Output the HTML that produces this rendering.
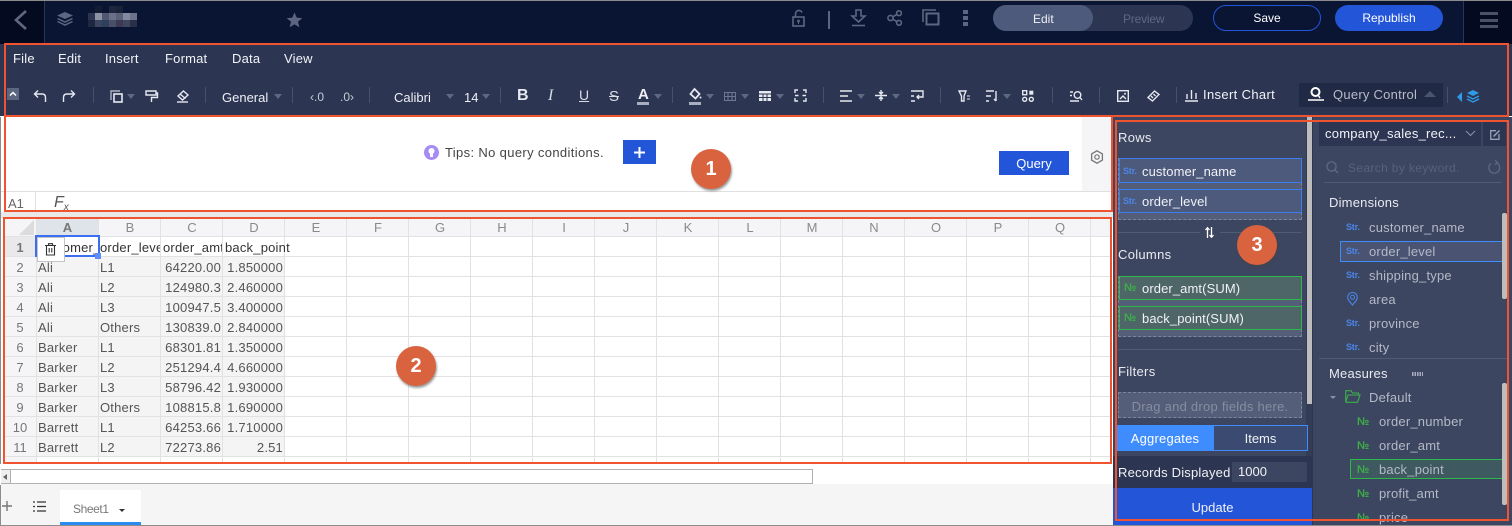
<!DOCTYPE html>
<html><head><meta charset="utf-8"><title>Sheet editor</title>
<style>
*{box-sizing:border-box;margin:0;padding:0}
html,body{width:1512px;height:526px;overflow:hidden;background:#fff}
body{position:relative;font-family:"Liberation Sans","Noto Sans CJK SC",sans-serif;font-size:13px;color:#fff}
.a{position:absolute}
.t{position:absolute;white-space:nowrap;line-height:16px}
.m{top:51px;font-size:13px;color:#f2f4f8;letter-spacing:.2px}
.sep{position:absolute;top:87px;width:1px;height:16px;background:#47506c}
.car{position:absolute;width:0;height:0;border:4px solid transparent;border-top:5px solid #5f6882;border-bottom:0;top:94px}
svg{position:absolute;overflow:visible}
.i{fill:none;stroke:#e6e9f0;stroke-width:1.4}
.h{fill:none;stroke:#5d6680;stroke-width:1.6}
.o{position:absolute;border:2px solid #f0532f;pointer-events:none}
.c{position:absolute;background:#d9623f;border-radius:50%;width:40px;height:40px;color:#fff;font:bold 20px/40px "Liberation Sans",sans-serif;text-align:center;box-shadow:1px 2px 2px rgba(70,70,70,.55)}
.v{position:absolute;top:219px;bottom:0;width:1px;height:243px;background:#e2e2e2}
.hr{position:absolute;left:3px;width:1108px;height:1px;background:#e2e2e2}
.ch{position:absolute;top:219px;height:17px;width:62px;text-align:center;line-height:17px;color:#8a8a8a;font-size:13px}
.rn{position:absolute;left:4px;width:32px;text-align:center;color:#777;font-size:13px;line-height:16px}
.d{position:absolute;color:#555;font-size:13px;line-height:16px;white-space:nowrap;overflow:hidden;letter-spacing:.2px}
.lb{position:absolute;left:1118px;color:#e8ebf2;font-size:13px;font-weight:bold;line-height:16px}
.chip{position:absolute;left:1119px;width:183px;border:1px solid #3b7ef0;background:#4e5a7c;color:#f0f2f7;font-size:13px;line-height:24px;padding-left:22px;letter-spacing:.1px}
.chip.g{border-color:#2eb84a;background:#4e6668}
.s{position:absolute;font:bold 9px/10px "Liberation Sans",sans-serif;color:#4a86e8;letter-spacing:-.2px}
.n{position:absolute;font:bold 11px/10px "Liberation Sans","DejaVu Sans",sans-serif;color:#3dae4a}
.f{position:absolute;color:#b4b9c8;font-size:13px;line-height:16px;letter-spacing:.2px;white-space:nowrap}
</style></head><body>

<!-- header -->
<div class="a" style="left:0;top:0;width:1512px;height:44px;background:#0a1433"></div>
<div class="a" style="left:0;top:0;width:1512px;height:1px;background:#8c8c8c"></div>
<div class="a" style="left:0;top:1px;width:45px;height:43px;background:#040a1f;border-right:1px solid #2c3552"></div>
<svg style="left:0;top:0" width="46" height="44"><path d="M26 11 L16 20 L26 29" fill="none" stroke="#5f6880" stroke-width="2.6"/></svg>
<svg style="top:11px;left:56px" width="20" height="16"><path d="M9 1 L17 4.5 L9 8 L1 4.5Z" fill="#5d6680"/><path d="M1.5 7.5 L9 11 L16.5 7.5M1.5 10.5 L9 14 L16.5 10.5" fill="none" stroke="#5d6680" stroke-width="1.5"/></svg>
<svg style="left:88px;top:6px" width="50" height="21"><g>
<rect x="0" y="7" width="7" height="7" fill="#2c3450"/><rect x="7" y="7" width="7" height="7" fill="#8c93a4"/><rect x="14" y="7" width="7" height="7" fill="#4f5870"/><rect x="21" y="7" width="7" height="7" fill="#69708a"/><rect x="28" y="7" width="7" height="7" fill="#5a6078"/><rect x="35" y="7" width="7" height="7" fill="#828aa0"/><rect x="42" y="7" width="7" height="7" fill="#6c7388"/>
<rect x="0" y="14" width="7" height="7" fill="#1f2740"/><rect x="7" y="14" width="7" height="7" fill="#3a4660"/><rect x="14" y="14" width="7" height="7" fill="#2e405c"/><rect x="21" y="14" width="7" height="7" fill="#4a5068"/><rect x="28" y="14" width="7" height="7" fill="#3c3a52"/><rect x="35" y="14" width="7" height="7" fill="#3f4660"/><rect x="42" y="14" width="7" height="7" fill="#2a3048"/>
<rect x="21" y="0" width="7" height="7" fill="#1e2640"/><rect x="28" y="0" width="7" height="7" fill="#1a2238"/><rect x="7" y="0" width="7" height="7" fill="#141c34"/></g></svg>
<svg style="left:286px;top:12px" width="17" height="16"><path d="M8.5 0.5 L10.7 5.6 L16.3 6.1 L12 9.8 L13.4 15.3 L8.5 12.4 L3.6 15.3 L5 9.8 L0.7 6.1 L6.3 5.6Z" fill="#5d6680"/></svg>
<svg style="left:792px;top:9px" width="14" height="18"><path d="M3.5 8 V5 A3.4 3.4 0 0 1 10 3.5" class="h" /><rect x="1" y="8" width="11" height="9" class="h"/><circle cx="6.5" cy="12" r="1.4" fill="#5d6680"/><rect x="6" y="12" width="1" height="3" fill="#5d6680"/></svg>
<div class="a" style="left:828px;top:11px;width:2px;height:18px;background:#5d6680"></div>
<svg style="left:851px;top:9px" width="16" height="18"><path d="M5 1 H10 V7 H14 L7.5 13 L1 7 H5Z" class="h"/><path d="M1 16.5 H14" class="h"/></svg>
<svg style="left:887px;top:10px" width="16" height="16"><circle cx="3.5" cy="8" r="2.6" class="h"/><circle cx="12" cy="3.2" r="2.4" class="h"/><circle cx="12" cy="12.8" r="2.4" class="h"/><path d="M5.8 6.8 L10 4.3M5.8 9.2 L10 11.7" class="h"/></svg>
<svg style="left:922px;top:9px" width="18" height="17"><path d="M1 13 V1 H14" class="h"/><rect x="4.5" y="4.5" width="12" height="11" fill="none" stroke="#5d6680" stroke-width="2"/></svg>
<div class="a" style="left:963px;top:10px;width:5px;height:16px;background:repeating-linear-gradient(#5d6680 0 4px,transparent 4px 6px)"></div>
<div class="a" style="left:993px;top:5px;width:200px;height:26px;border-radius:13px;background:#2c3552"></div>
<div class="a" style="left:993px;top:5px;width:100px;height:26px;border-radius:13px 13px 13px 13px;background:#4e5a7c"></div>
<div class="t" style="left:1033px;top:11px;font-size:12px;color:#eef0f5">Edit</div>
<div class="t" style="left:1123px;top:11px;font-size:12px;letter-spacing:-.2px;color:#5f6880">Preview</div>
<div class="a" style="left:1213px;top:5px;width:108px;height:26px;border-radius:13px;border:1px solid #2355d8;color:#fff;text-align:center;line-height:24px;font-size:12px">Save</div>
<div class="a" style="left:1335px;top:5px;width:108px;height:26px;border-radius:13px;background:#2355d8;color:#fff;text-align:center;line-height:26px;font-size:12px">Republish</div>
<div class="a" style="left:1463px;top:1px;width:49px;height:43px;background:#040a1f;border-left:1px solid #2c3552"></div>
<div class="a" style="left:1480px;top:12px;width:18px;height:3px;background:#4a5268"></div>
<div class="a" style="left:1480px;top:19px;width:18px;height:3px;background:#4a5268"></div>
<div class="a" style="left:1480px;top:25px;width:18px;height:3px;background:#4a5268"></div>

<!-- toolbar -->
<div class="a" style="left:0;top:44px;width:1512px;height:72px;background:#2c3552"></div>
<div class="t m" style="left:13px">File</div>
<div class="t m" style="left:58px">Edit</div>
<div class="t m" style="left:105px">Insert</div>
<div class="t m" style="left:165px">Format</div>
<div class="t m" style="left:232px">Data</div>
<div class="t m" style="left:284px">View</div>

<div class="a" style="left:7px;top:88px;width:12px;height:12px;background:#5d6680"></div>
<svg style="left:7px;top:88px" width="12" height="12"><path d="M3 7.5 L6 4.5 L9 7.5" fill="none" stroke="#fff" stroke-width="1.5"/></svg>
<svg style="left:33px;top:89px" width="14" height="14"><path d="M5 1.5 L1.5 5 L5 8.5M1.5 5 H9 Q12.5 5 12.5 8.5 V13" class="i"/></svg>
<svg style="left:62px;top:89px" width="14" height="14"><path d="M9 1.5 L12.5 5 L9 8.5M12.5 5 H5 Q1.5 5 1.5 8.5 V13" class="i"/></svg>
<div class="sep" style="left:93px"></div>
<svg style="left:110px;top:90px" width="13" height="13"><path d="M1 10 V1 H10" class="i" stroke-opacity=".7"/><rect x="4" y="4" width="8" height="8" fill="none" stroke="#e6e9f0" stroke-width="1.6"/></svg>
<div class="car" style="left:127px"></div>
<svg style="left:145px;top:90px" width="13" height="13"><path d="M1 1 H11 V5 H1Z M11 3 H12.5 V7.5 H6.5 V12" class="i"/></svg>
<svg style="left:176px;top:90px" width="13" height="13"><path d="M7.5 1 L12 5 L6.5 10 L2 6Z" class="i"/><path d="M4 4 L9.5 8.5" class="i"/><path d="M1 12 H12" class="i"/></svg>
<div class="sep" style="left:205px"></div>
<div class="t" style="left:222px;top:90px;font-size:13px;color:#eef0f5">General</div>
<div class="car" style="left:274px"></div>
<div class="sep" style="left:292px"></div>
<div class="t" style="left:310px;top:89px;font-size:12px;color:#c8ccd8">‹.0</div>
<div class="t" style="left:340px;top:89px;font-size:12px;color:#c8ccd8">.0›</div>
<div class="sep" style="left:369px"></div>
<div class="t" style="left:394px;top:90px;font-size:13px;color:#eef0f5">Calibri</div>
<div class="car" style="left:446px"></div>
<div class="t" style="left:464px;top:90px;font-size:13px;color:#eef0f5">14</div>
<div class="car" style="left:482px"></div>
<div class="sep" style="left:500px"></div>
<div class="t" style="left:517px;top:87px;font:bold 16px/18px 'Liberation Sans',sans-serif;color:#e6e9f0">B</div>
<div class="t" style="left:548px;top:87px;font:italic 16px/18px 'Liberation Serif',serif;color:#d8dce6">I</div>
<div class="t" style="left:579px;top:87px;font-size:14px;line-height:16px;color:#d8dce6;text-decoration:underline">U</div>
<div class="t" style="left:609px;top:88px;font-size:15px;line-height:18px;color:#d8dce6;text-decoration:line-through">S</div>
<div class="t" style="left:638px;top:87px;font:bold 15px/16px 'Liberation Sans',sans-serif;color:#eef0f5">A</div>
<div class="a" style="left:637px;top:102px;width:12px;height:3px;background:#a8aebf"></div>
<div class="car" style="left:654px"></div>
<div class="sep" style="left:672px"></div>
<svg style="left:689px;top:88px" width="13" height="12"><path d="M5.5 1 L10.5 6 L6.5 10.5 L1.5 6Z" fill="none" stroke="#e6e9f0" stroke-width="1.8"/><circle cx="11.5" cy="9.5" r="1" fill="#e6e9f0"/></svg>
<div class="a" style="left:689px;top:102px;width:12px;height:3px;background:#a8aebf"></div>
<div class="car" style="left:706px"></div>
<svg style="left:724px;top:92px" width="12" height="9"><path d="M.5 .5 H11.5 V8.5 H.5Z M.5 4.5 H11.5 M4 .5 V8.5 M8 .5 V8.5" fill="none" stroke="#6f7890" stroke-width="1"/></svg>
<div class="car" style="left:741px"></div>
<svg style="left:759px;top:91px" width="12" height="10"><rect width="12" height="10" fill="#e6e9f0"/><path d="M0 3 H12 M0 6.5 H12 M4 3 V10 M8 3 V10" stroke="#2c3552" stroke-width="1"/></svg>
<div class="car" style="left:776px"></div>
<svg style="left:794px;top:89px" width="13" height="13"><path d="M1 4 V1 H4 M9 1 H12 V4 M12 9 V12 H9 M4 12 H1 V9 M1 6.5 H4.5 M8.5 6.5 H12" class="i"/></svg>
<div class="sep" style="left:823px"></div>
<svg style="left:840px;top:90px" width="12" height="12"><path d="M0 1 H12 M0 6 H8 M0 11 H12" class="i"/></svg>
<div class="car" style="left:857px"></div>
<svg style="left:875px;top:89px" width="12" height="13"><path d="M0 6.5 H12 M6 1 V4.5 M4 3 L6 5 L8 3 M6 12 V8.5 M4 10 L6 8 L8 10" class="i"/></svg>
<div class="car" style="left:892px"></div>
<svg style="left:911px;top:90px" width="12" height="12"><path d="M0 1 H12 V7 H6 M8 5 L6 7 L8 9 M0 6 H3 M0 11 H4" class="i"/></svg>
<div class="sep" style="left:940px"></div>
<svg style="left:958px;top:90px" width="13" height="12"><path d="M1 1 H8 L6 6 V11 H3.5 V6Z" class="i"/><path d="M9 6 H12 M9 9 H12" stroke="#e6e9f0" stroke-width="1"/></svg>
<svg style="left:986px;top:90px" width="12" height="12"><path d="M0 1 H8 M0 6 H5 M0 11 H3 M10 1 V11 M8 9 L10 11" class="i"/></svg>
<div class="car" style="left:1003px"></div>
<svg style="left:1022px;top:90px" width="12" height="12"><rect x=".7" y=".7" width="4" height="4" class="i" stroke-width="1.2"/><rect x="7.3" y=".7" width="4" height="4" fill="#e6e9f0"/><circle cx="2.7" cy="9.3" r="2" class="i" stroke-width="1.2"/><circle cx="9.3" cy="9.3" r="2" class="i" stroke-width="1.2"/></svg>
<div class="sep" style="left:1052px"></div>
<svg style="left:1070px;top:90px" width="13" height="12"><path d="M0 2 H3 M0 5.5 H2 M0 11 H9" class="i" stroke-width="1"/><circle cx="7.5" cy="5" r="3.3" class="i"/><path d="M10 7.5 L12 10" class="i"/></svg>
<div class="sep" style="left:1099px"></div>
<svg style="left:1117px;top:90px" width="12" height="12"><rect x=".7" y=".7" width="10.6" height="10.6" class="i"/><path d="M3 9 L6 6 L9 9" class="i" stroke-width="1"/><circle cx="8" cy="3.8" r="1" fill="#e6e9f0"/></svg>
<svg style="left:1147px;top:90px" width="13" height="12"><path d="M1 7.5 L7.5 1 L12 4.5 L5.5 11Z M4 6 L6 8 M6.5 4 L8.5 6" class="i" stroke-width="1.2"/></svg>
<div class="sep" style="left:1176px"></div>
<svg style="left:1185px;top:88px" width="13" height="14"><path d="M2 6 V11 M6.5 2 V11 M11 5 V11 M0 13 H13" class="i"/></svg>
<div class="t" style="left:1203px;top:87px;font-size:13px;color:#f2f4f8;letter-spacing:.35px">Insert Chart</div>
<div class="a" style="left:1299px;top:83px;width:144px;height:24px;background:#212a44"></div>
<svg style="left:1308px;top:87px" width="16" height="14"><circle cx="7.5" cy="5" r="4" fill="none" stroke="#fff" stroke-width="2"/><path d="M10 8 L12 11M0 13 H16" stroke="#fff" stroke-width="1.4"/></svg>
<div class="t" style="left:1333px;top:87px;font-size:13px;color:#b8bccb;letter-spacing:.25px">Query Control</div>
<div class="a" style="left:1424px;top:91px;border:6px solid transparent;border-bottom:6px solid #4a5370;border-top:0"></div>
<div class="sep" style="left:1447px"></div>
<div class="a" style="left:1457px;top:92px;border:5px solid transparent;border-right:5px solid #2e9be6;border-left:0"></div>
<svg style="left:1467px;top:90px" width="12" height="12"><path d="M6 0 L12 3 L6 6 L0 3Z" fill="#2e9be6"/><path d="M0 6 L6 9 L12 6M0 9 L6 12 L12 9" fill="none" stroke="#2e9be6" stroke-width="1.4"/></svg>

<!-- query area -->
<div class="a" style="left:1082px;top:117px;width:30px;height:74px;background:#f5f5f7"></div>
<svg style="left:424px;top:145px" width="15" height="16"><circle cx="7.5" cy="7.5" r="7.5" fill="#a78bf5"/><circle cx="7.5" cy="6" r="3" fill="#fff"/><rect x="6" y="8" width="3" height="4" fill="#fff"/></svg>
<div class="t" style="left:445px;top:145px;font-size:13px;color:#444;letter-spacing:.35px">Tips: No query conditions.</div>
<div class="a" style="left:623px;top:140px;width:33px;height:24px;background:#2355d8"></div>
<svg style="left:634px;top:147px" width="11" height="11"><path d="M5.5 0 V11 M0 5.5 H11" stroke="#fff" stroke-width="2"/></svg>
<div class="a" style="left:999px;top:151px;width:70px;height:24px;background:#2355d8;color:#fff;text-align:center;line-height:25px;font-size:13px">Query</div>
<svg style="left:1090px;top:150px" width="14" height="14"><path d="M7 .8 L12.4 3.9 V10.1 L7 13.2 L1.6 10.1 V3.9Z" fill="none" stroke="#777" stroke-width="1.3"/><circle cx="7" cy="7" r="2.2" fill="none" stroke="#777" stroke-width="1.2"/></svg>
<div class="a" style="left:0;top:191px;width:1112px;height:1px;background:#e0e0e0"></div>
<div class="a" style="left:35px;top:191px;width:1px;height:20px;background:#e0e0e0"></div>
<div class="t" style="left:8px;top:196px;font-size:13px;color:#666">A1</div>
<div class="t" style="left:54px;top:194px;font:italic 16px/18px 'Liberation Sans',sans-serif;color:#555">F<span style="font-size:10px;position:relative;top:3px">x</span></div>
<div class="a" style="left:0;top:212px;width:1113px;height:6px;background:#e8e8e8"></div>
<div class="a" style="left:0;top:117px;width:1px;height:409px;background:#8c8c8c"></div>

<!-- grid -->
<div class="a" style="left:3px;top:219px;width:1108px;height:17px;background:#f5f5f7"></div>
<div class="a" style="left:3px;top:237px;width:33px;height:225px;background:#f5f5f7"></div>
<div class="a" style="left:37px;top:257px;width:247px;height:199px;background:#f4f4f4"></div>
<div class="a" style="left:3px;top:237px;width:33px;height:19px;background:#e9e9ec"></div>
<div class="a" style="left:37px;top:219px;width:61px;height:17px;background:#dfe3ea"></div>
<svg style="left:19px;top:220px" width="16" height="15"><path d="M15 0 V15 H0Z" fill="#dcdcdc"/></svg>
<div class="v" style="left:36px"></div><div class="v" style="left:98px"></div><div class="v" style="left:160px"></div><div class="v" style="left:222px"></div><div class="v" style="left:284px"></div><div class="v" style="left:346px"></div><div class="v" style="left:408px"></div><div class="v" style="left:470px"></div><div class="v" style="left:532px"></div><div class="v" style="left:594px"></div><div class="v" style="left:656px"></div><div class="v" style="left:718px"></div><div class="v" style="left:780px"></div><div class="v" style="left:842px"></div><div class="v" style="left:904px"></div><div class="v" style="left:966px"></div><div class="v" style="left:1028px"></div><div class="v" style="left:1090px"></div>
<div class="hr" style="top:236px"></div><div class="hr" style="top:256px"></div><div class="hr" style="top:276px"></div><div class="hr" style="top:296px"></div><div class="hr" style="top:316px"></div><div class="hr" style="top:336px"></div><div class="hr" style="top:356px"></div><div class="hr" style="top:376px"></div><div class="hr" style="top:396px"></div><div class="hr" style="top:416px"></div><div class="hr" style="top:436px"></div><div class="hr" style="top:456px"></div>
<div class="ch" style="left:37px;width:61px;font-weight:bold;color:#777">A</div><div class="ch" style="left:99px">B</div><div class="ch" style="left:161px">C</div><div class="ch" style="left:223px">D</div><div class="ch" style="left:285px">E</div><div class="ch" style="left:347px">F</div><div class="ch" style="left:409px">G</div><div class="ch" style="left:471px">H</div><div class="ch" style="left:533px">I</div><div class="ch" style="left:595px">J</div><div class="ch" style="left:657px">K</div><div class="ch" style="left:719px">L</div><div class="ch" style="left:781px">M</div><div class="ch" style="left:843px">N</div><div class="ch" style="left:905px">O</div><div class="ch" style="left:967px">P</div><div class="ch" style="left:1029px">Q</div>
<div class="rn" style="top:240px;font-weight:bold">1</div><div class="rn" style="top:260px">2</div><div class="rn" style="top:280px">3</div><div class="rn" style="top:300px">4</div><div class="rn" style="top:320px">5</div><div class="rn" style="top:340px">6</div><div class="rn" style="top:360px">7</div><div class="rn" style="top:380px">8</div><div class="rn" style="top:400px">9</div><div class="rn" style="top:420px">10</div><div class="rn" style="top:440px">11</div>

<div class="d" style="left:38px;top:240px;width:60px;color:#333">customer_name</div>
<div class="d" style="left:100px;top:240px;width:60px;color:#333">order_level</div>
<div class="d" style="left:163px;top:240px;width:59px;color:#333">order_amt</div>
<div class="d" style="left:225px;top:240px;color:#333">back_point</div>

<div class="d" style="left:38px;top:260px">Ali</div><div class="d" style="left:100px;top:260px">L1</div><div class="d" style="left:161px;top:260px;width:60px;text-align:right">64220.00</div><div class="d" style="left:223px;top:260px;width:60px;text-align:right">1.850000</div>
<div class="d" style="left:38px;top:280px">Ali</div><div class="d" style="left:100px;top:280px">L2</div><div class="d" style="left:161px;top:280px;width:60px;text-align:right">124980.3</div><div class="d" style="left:223px;top:280px;width:60px;text-align:right">2.460000</div>
<div class="d" style="left:38px;top:300px">Ali</div><div class="d" style="left:100px;top:300px">L3</div><div class="d" style="left:161px;top:300px;width:60px;text-align:right">100947.5</div><div class="d" style="left:223px;top:300px;width:60px;text-align:right">3.400000</div>
<div class="d" style="left:38px;top:320px">Ali</div><div class="d" style="left:100px;top:320px">Others</div><div class="d" style="left:161px;top:320px;width:60px;text-align:right">130839.0</div><div class="d" style="left:223px;top:320px;width:60px;text-align:right">2.840000</div>
<div class="d" style="left:38px;top:340px">Barker</div><div class="d" style="left:100px;top:340px">L1</div><div class="d" style="left:161px;top:340px;width:60px;text-align:right">68301.81</div><div class="d" style="left:223px;top:340px;width:60px;text-align:right">1.350000</div>
<div class="d" style="left:38px;top:360px">Barker</div><div class="d" style="left:100px;top:360px">L2</div><div class="d" style="left:161px;top:360px;width:60px;text-align:right">251294.4</div><div class="d" style="left:223px;top:360px;width:60px;text-align:right">4.660000</div>
<div class="d" style="left:38px;top:380px">Barker</div><div class="d" style="left:100px;top:380px">L3</div><div class="d" style="left:161px;top:380px;width:60px;text-align:right">58796.42</div><div class="d" style="left:223px;top:380px;width:60px;text-align:right">1.930000</div>
<div class="d" style="left:38px;top:400px">Barker</div><div class="d" style="left:100px;top:400px">Others</div><div class="d" style="left:161px;top:400px;width:60px;text-align:right">108815.8</div><div class="d" style="left:223px;top:400px;width:60px;text-align:right">1.690000</div>
<div class="d" style="left:38px;top:420px">Barrett</div><div class="d" style="left:100px;top:420px">L1</div><div class="d" style="left:161px;top:420px;width:60px;text-align:right">64253.66</div><div class="d" style="left:223px;top:420px;width:60px;text-align:right">1.710000</div>
<div class="d" style="left:38px;top:440px">Barrett</div><div class="d" style="left:100px;top:440px">L2</div><div class="d" style="left:161px;top:440px;width:60px;text-align:right">72273.86</div><div class="d" style="left:223px;top:440px;width:60px;text-align:right">2.51</div>

<div class="a" style="left:35px;top:235px;width:65px;height:22px;border:2px solid #3b6ff0;border-left-width:2px"></div>
<div class="a" style="left:95px;top:253px;width:6px;height:6px;background:#5f8dff"></div>
<div class="a" style="left:37px;top:237px;width:28px;height:25px;background:#fff;border:1px solid #c4c4c4"></div>
<svg style="left:45px;top:243px" width="12" height="13"><path d="M0 2.5 H11 M3.5 2.5 V.7 H7.5 V2.5 M1.5 2.5 V12 H9.5 V2.5 M4.2 5 V9.5 M6.8 5 V9.5" fill="none" stroke="#333" stroke-width="1.1"/></svg>

<!-- hscroll + tabs -->
<div class="a" style="left:0;top:464px;width:1113px;height:21px;background:#fff"></div>
<div class="a" style="left:1px;top:469px;width:812px;height:15px;background:#fff;border:1px solid #b0b0b0"></div>
<div class="a" style="left:1px;top:470px;width:10px;height:13px;background:#efefef;border-right:1px solid #b0b0b0"></div>
<div class="a" style="left:3px;top:474px;border:3px solid transparent;border-right:4px solid #666;border-left:0"></div>
<div class="a" style="left:1px;top:484px;width:1112px;height:41px;background:#f5f5f6"></div>
<svg style="left:2px;top:501px" width="10" height="11"><path d="M5 0 V10 M0 5 H10" stroke="#777" stroke-width="1.4"/></svg>
<svg style="left:33px;top:501px" width="13" height="11"><path d="M0 1 H2 M0 5.5 H2 M0 10 H2 M4 1 H13 M4 5.5 H13 M4 10 H13" stroke="#333" stroke-width="1.3"/></svg>
<div class="a" style="left:60px;top:490px;width:81px;height:35px;background:#fff;border-bottom:3px solid #2b8cf0"></div>
<div class="t" style="left:73px;top:501px;font-size:12px;letter-spacing:-.4px;color:#777">Sheet1</div>
<div class="a" style="left:119px;top:509px;border:3px solid transparent;border-top:3px solid #333;border-bottom:0"></div>

<!-- right panels -->
<div class="a" style="left:1113px;top:117px;width:399px;height:409px;background:#3d4660"></div>
<div class="a" style="left:1306px;top:117px;width:6px;height:409px;background:#343c55"></div>
<div class="a" style="left:1307px;top:117px;width:5px;height:287px;background:#bdbdbd"></div>
<div class="a" style="left:1312px;top:117px;width:1px;height:409px;background:#2c3552"></div>

<div class="lb" style="top:130px;font-weight:normal;letter-spacing:.3px">Rows</div>
<div class="a" style="left:1118px;top:158px;width:184px;height:62px;background:#555e78;border:1px dashed #7d859c"></div>
<div class="chip" style="top:158px;height:25px;line-height:25px">customer_name</div><div class="s" style="left:1123px;top:166px">Str.</div>
<div class="chip" style="top:189px;height:24px">order_level</div><div class="s" style="left:1123px;top:196px">Str.</div>
<div class="a" style="left:1118px;top:232px;width:82px;height:1px;background:#525b75"></div>
<div class="a" style="left:1220px;top:232px;width:82px;height:1px;background:#525b75"></div>
<svg style="left:1205px;top:227px" width="9" height="11"><path d="M2.5 11 V1 M0.5 3 L2.5 .7 L4.5 3 M6.5 0 V10 M4.5 8 L6.5 10.3 L8.5 8" fill="none" stroke="#fff" stroke-width="1.3"/></svg>
<div class="lb" style="top:247px;font-weight:normal;letter-spacing:.3px">Columns</div>
<div class="a" style="left:1118px;top:276px;width:184px;height:61px;background:#555e78;border:1px dashed #7d859c"></div>
<div class="chip g" style="top:276px;height:24px">order_amt(SUM)</div><div class="n" style="left:1124px;top:283px">№</div>
<div class="chip g" style="top:306px;height:24px">back_point(SUM)</div><div class="n" style="left:1124px;top:313px">№</div>
<div class="a" style="left:1118px;top:349px;width:184px;height:1px;background:#525b75"></div>
<div class="lb" style="top:364px;font-weight:normal;letter-spacing:.3px">Filters</div>
<div class="a" style="left:1118px;top:392px;width:184px;height:26px;background:#555e78;border:1px dashed #7d859c;color:#868da2;text-align:center;line-height:27px;font-size:13px;letter-spacing:.25px">Drag and drop fields here.</div>
<div class="a" style="left:1117px;top:425px;width:96px;height:26px;background:#3f8cff;color:#fff;text-align:center;line-height:27px;font-size:13px;letter-spacing:.2px">Aggregates</div>
<div class="a" style="left:1213px;top:425px;width:95px;height:26px;background:#3a4a70;border:1px solid #3f8cff;color:#f0f2f7;text-align:center;line-height:25px;font-size:13px">Items</div>
<div class="a" style="left:1113px;top:456px;width:199px;height:32px;background:#2c3552"></div>
<div class="t" style="left:1118px;top:465px;font-size:13px;color:#f0f2f7;letter-spacing:.2px">Records Displayed</div>
<div class="a" style="left:1232px;top:462px;width:75px;height:20px;background:#3d4660;color:#f0f2f7;line-height:20px;padding-left:6px;font-size:13px">1000</div>
<div class="a" style="left:1113px;top:488px;width:199px;height:38px;background:#2355d8;color:#f0f2f7;text-align:center;line-height:39px;font-size:13px">Update</div>

<div class="a" style="left:1319px;top:122px;width:162px;height:24px;background:#2c3552;color:#f0f2f7;line-height:24px;padding-left:6px;font-size:13px;letter-spacing:.25px">company_sales_rec...</div>
<svg style="left:1465px;top:130px" width="11" height="7"><path d="M1 1 L5.5 5.5 L10 1" fill="none" stroke="#8a92a8" stroke-width="1.1"/></svg>
<div class="a" style="left:1483px;top:122px;width:23px;height:24px;background:#2c3552"></div>
<svg style="left:1490px;top:130px" width="10" height="10"><path d="M9 4 V9.3 H.7 V.7 H6" fill="none" stroke="#9aa1b5" stroke-width="1.3"/><path d="M3.5 6.5 L9.5 .5" stroke="#9aa1b5" stroke-width="1.5"/></svg>
<svg style="left:1326px;top:161px" width="13" height="13"><circle cx="5.5" cy="5.5" r="4.6" fill="none" stroke="#5f6880" stroke-width="1.3"/><path d="M9 9 L12 12" stroke="#5f6880" stroke-width="1.4"/></svg>
<div class="t" style="left:1348px;top:160px;font-size:12px;color:#596179;letter-spacing:.35px">Search by keyword.</div>
<svg style="left:1488px;top:160px" width="13" height="14"><path d="M3 3.5 A5.4 5.4 0 1 0 8 2.7" fill="none" stroke="#5f6880" stroke-width="1.3"/><path d="M7 0 L9.5 2.7 L6.5 4.5" fill="none" stroke="#5f6880" stroke-width="1.1"/></svg>
<div class="a" style="left:1324px;top:182px;width:178px;height:1px;background:#525b75"></div>
<div class="f" style="left:1329px;top:195px;color:#e8ebf2">Dimensions</div>

<div class="a" style="left:1340px;top:241px;width:164px;height:21px;background:#4a5472;border:1px solid #3f8cff"></div>
<div class="s" style="left:1346px;top:222px">Str.</div><div class="f" style="left:1369px;top:220px">customer_name</div>
<div class="s" style="left:1346px;top:246px">Str.</div><div class="f" style="left:1369px;top:244px">order_level</div>
<div class="s" style="left:1346px;top:270px">Str.</div><div class="f" style="left:1369px;top:268px">shipping_type</div>
<svg style="left:1347px;top:292px" width="11" height="14"><path d="M5.5 13 C2 9 .7 7.5 .7 5.3 A4.8 4.8 0 0 1 10.3 5.3 C10.3 7.5 9 9 5.5 13Z" fill="none" stroke="#4a86e8" stroke-width="1.1"/><circle cx="5.5" cy="5.3" r="2" fill="none" stroke="#4a86e8" stroke-width="1"/></svg><div class="f" style="left:1369px;top:292px">area</div>
<div class="s" style="left:1346px;top:318px">Str.</div><div class="f" style="left:1369px;top:316px">province</div>
<div class="s" style="left:1346px;top:342px">Str.</div><div class="f" style="left:1369px;top:340px">city</div>
<div class="a" style="left:1319px;top:358px;width:189px;height:1px;background:#525b75"></div>
<div class="f" style="left:1329px;top:366px;color:#e8ebf2">Measures</div>
<div class="a" style="left:1412px;top:372px;width:11px;height:4px;background:repeating-linear-gradient(90deg,#a8aebf 0 1.5px,transparent 1.5px 2.5px)"></div>
<div class="a" style="left:1330px;top:396px;border:3px solid transparent;border-top:3px solid #8a92a8;border-bottom:0"></div>
<svg style="left:1345px;top:390px" width="16" height="13"><path d="M.7 12.3 V.7 H6 L7.5 3 H13.5 V5 M.7 12.3 H12.5 L15 5 H3 L.7 12.3" fill="none" stroke="#3dae4a" stroke-width="1.1"/></svg>
<div class="f" style="left:1369px;top:390px">Default</div>
<div class="a" style="left:1350px;top:459px;width:154px;height:20px;background:#3e5a60;border:1px solid #2eb84a"></div>
<div class="n" style="left:1357px;top:417px">№</div><div class="f" style="left:1379px;top:414px">order_number</div>
<div class="n" style="left:1357px;top:441px">№</div><div class="f" style="left:1379px;top:438px">order_amt</div>
<div class="n" style="left:1357px;top:465px">№</div><div class="f" style="left:1379px;top:462px">back_point</div>
<div class="n" style="left:1357px;top:489px">№</div><div class="f" style="left:1379px;top:486px">profit_amt</div>
<div class="n" style="left:1357px;top:513px">№</div><div class="f" style="left:1379px;top:510px">price</div>
<div class="a" style="left:1502px;top:213px;width:5px;height:86px;background:#bdbdbd;border-radius:2px"></div>
<div class="a" style="left:1502px;top:383px;width:5px;height:122px;background:#bdbdbd;border-radius:2px"></div>
<div class="a" style="left:0;top:525px;width:1512px;height:1px;background:#8c8c8c"></div>

<!-- annotations -->
<div class="o" style="left:4px;top:43px;width:1505px;height:74px"></div>
<div class="o" style="left:4px;top:115px;width:1109px;height:97px"></div>
<div class="o" style="left:3px;top:217px;width:1109px;height:247px"></div>
<div class="o" style="left:1115px;top:120px;width:394px;height:401px"></div>
<div class="c" style="left:691px;top:149px">1</div>
<div class="c" style="left:396px;top:346px">2</div>
<div class="c" style="left:1237px;top:225px">3</div>
</body></html>
